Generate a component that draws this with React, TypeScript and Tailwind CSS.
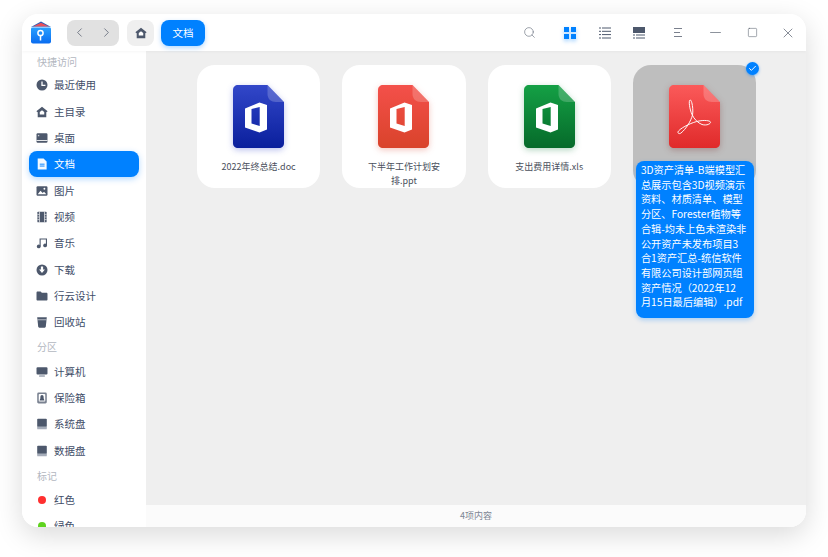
import { ChevronLeft, ChevronRight, Search, Minus, Square, X, Check } from "lucide-react";
import type { ReactNode } from "react";

const ink = "#4d586c";

/* Small filled glyphs for the sidebar, all on a 14px box */
const glyphs: Record<string, ReactNode> = {
  recent: (
    <>
      <circle cx="7" cy="7" r="6.4" fill={ink} />
      <path d="M7 3V7.4H11" stroke="#fff" strokeWidth="1.5" fill="none" />
    </>
  ),
  home: (
    <>
      <path d="M7 .8 13.6 6.2 12 7.2V13H2V7.2L.4 6.2Z" fill={ink} />
      <path d="M4.4 7 7 5l2.6 2V9.8H4.4Z" fill="#fff" />
    </>
  ),
  desktop: (
    <>
      <rect x=".6" y="1.6" width="12.8" height="10.8" rx="1.4" fill={ink} />
      <rect x=".6" y="9.4" width="12.8" height="1" fill="#fff" />
      <rect x="2.2" y="3.4" width="1.6" height="1.6" fill="#fff" opacity=".7" />
    </>
  ),
  doc: (
    <>
      <path d="M2 .6H8.8L12.4 4.2V13.4H2Z" fill="#fff" opacity=".95" />
      <path d="M4.4 7.2H10M4.4 9.4H10" stroke="#0081ff" strokeWidth="1.1" />
    </>
  ),
  image: (
    <>
      <rect x=".6" y="1.6" width="12.8" height="10.8" rx="1.4" fill={ink} />
      <path d="M2 10.8 5.2 6.6 7.8 9.4 9.4 7.8 12 10.8Z" fill="#fff" />
      <circle cx="9.8" cy="4.4" r="1.1" fill="#fff" />
    </>
  ),
  video: (
    <>
      <rect x="1.6" y=".8" width="10.8" height="12.4" rx="1" fill={ink} />
      <path d="M4 .8V13.2M10 .8V13.2" stroke="#fff" strokeWidth=".8" />
      <path d="M1.6 4H4M1.6 7H4M1.6 10H4M10 4H12.4M10 7H12.4M10 10H12.4" stroke="#fff" strokeWidth=".7" />
    </>
  ),
  music: (
    <>
      <path d="M4.8 11V2.4H12.2V9.8" stroke={ink} strokeWidth="1.3" fill="none" />
      <circle cx="3.2" cy="11" r="2.2" fill={ink} />
      <circle cx="10.6" cy="9.8" r="2.2" fill={ink} />
    </>
  ),
  download: (
    <>
      <circle cx="7" cy="7" r="6.4" fill={ink} />
      <path d="M5.7 3H8.3V6.4H10.4L7 10.4 3.6 6.4H5.7Z" fill="#fff" />
    </>
  ),
  folder: <path d="M.6 3.2C.6 2.4 1.1 1.8 1.9 1.8H5.4L6.8 3.2H12.1C12.9 3.2 13.4 3.8 13.4 4.5V11C13.4 11.8 12.9 12.3 12.1 12.3H1.9C1.1 12.3 .6 11.8 .6 11Z" fill={ink} />,
  trash: (
    <>
      <path d="M1.4 1.6H12.6L11.4 12.6C11.3 13.2 10.9 13.6 10.2 13.6H3.8C3.1 13.6 2.7 13.2 2.6 12.6Z" fill={ink} />
      <path d="M1.8 4.4H12.2" stroke="#fff" strokeWidth=".7" />
    </>
  ),
  computer: (
    <>
      <rect x=".6" y="1.6" width="12.8" height="8.4" rx="1.2" fill={ink} />
      <rect x="3.6" y="10.8" width="6.8" height="1.8" rx=".6" fill="#9aa2b0" />
    </>
  ),
  vault: (
    <>
      <rect x="1.4" y=".6" width="11.2" height="12.8" rx="1.6" fill={ink} opacity=".75" />
      <rect x="3.2" y="2.2" width="7.6" height="8.8" rx="1" fill="#fff" />
      <path d="M7 3.6a1.9 1.9 0 0 1 1.9 1.9V7.4L9.9 9.8H4.1L5.1 7.4V5.5A1.9 1.9 0 0 1 7 3.6Z" fill={ink} />
    </>
  ),
  disk: (
    <>
      <rect x="1.4" y=".8" width="11.2" height="9.6" rx="1" fill={ink} />
      <rect x="1.4" y="10" width="11.2" height="3.2" rx=".8" fill="#a6adba" />
    </>
  ),
};

function Glyph({ name }: { name: string }) {
  return (
    <svg width="12" height="12" viewBox="0 0 14 14" className="shrink-0">
      {glyphs[name]}
    </svg>
  );
}

function SideItem({ icon, label, active }: { icon: string; label: string; active?: boolean }) {
  return (
    <div
      className={
        "mx-[7px] flex h-[26.35px] shrink-0 items-center gap-[6px] rounded-lg pl-[7px] text-[10.5px] " +
        (active ? "bg-[#0081ff] text-white shadow-[0_2px_6px_rgba(0,129,255,0.3)]" : "text-[#414d68]")
      }
    >
      <Glyph name={icon} />
      <span>{label}</span>
    </div>
  );
}

function SideHead({ label }: { label: string }) {
  return <div className="flex h-[23px] shrink-0 items-center pl-[15px] text-[10px] text-[#b3b7bf] first:h-[21px]">{label}</div>;
}

function TagItem({ color, label }: { color: string; label: string }) {
  return (
    <div className="mx-[7px] flex h-[26.35px] shrink-0 items-center gap-[6px] pl-[7px] text-[10.5px] text-[#414d68]">
      <span className="flex w-[12px] shrink-0 justify-center">
        <span className={"h-[8px] w-[8px] rounded-full " + color} />
      </span>
      <span>{label}</span>
    </div>
  );
}

/* Document icon: page with folded corner, glyph drawn on top */
function FileIcon({ id, from, to, glow, kind }: { id: string; from: string; to: string; glow: string; kind: "office" | "pdf" }) {
  return (
    <svg width="51" height="64" viewBox="0 0 51 64" className={"block " + glow}>
      <defs>
        <linearGradient id={id} x1="0" y1="0" x2="0" y2="1">
          <stop offset="0" stopColor={from} />
          <stop offset="1" stopColor={to} />
        </linearGradient>
      </defs>
      <path d="M5 0H34.5L51 17V58C51 61.3 48.8 63 46 63H5C2.2 63 0 61.3 0 58V5C0 2 2.2 0 5 0Z" fill={"url(#" + id + ")"} />
      <path d="M34.5 0L51 17H43C38 17 34.5 14 34.5 9Z" fill="#fff" opacity=".2" />
      {kind === "office" ? (
        <path
          fillRule="evenodd"
          d="M12 23.5 26.5 17.5 34 20V44.5L26.5 47.5 12 42.5ZM26.7 22 18.5 24V38.5L26.7 41Z"
          fill="#fff"
        />
      ) : (
        <path
          d="M21 15C19.5 15.5 20.5 24 23 29.5C25 34 29 38 33 39.5C38 41 42 38.5 41.5 37C41 35.5 35 35 30 36C24 37 13 42 9.5 46C8 48 10 49.5 12 48C17 44 22 36 23.5 30C24.5 25 23 14.5 21 15Z"
          fill="none"
          stroke="#fff"
          strokeWidth="1"
          opacity=".95"
        />
      )}
    </svg>
  );
}

function FileCard({ name, icon }: { name: string; icon: ReactNode }) {
  return (
    <div className="flex h-[123px] w-[123.3px] flex-col items-center rounded-[18px] bg-white pt-[20px]">
      {icon}
      <div className="mt-[11px] w-[78px] text-center text-[9px] leading-[14px] text-[#4a4f5c]">{name}</div>
    </div>
  );
}

export default function App() {
  return (
    <div className="h-[557px] w-[828px] overflow-hidden bg-white pl-[22px] pt-[14px] font-['Noto_Sans_CJK_SC',sans-serif]">
      <div className="flex h-[513px] w-[784px] flex-col overflow-hidden rounded-[16px] bg-white shadow-[0_8px_28px_rgba(0,0,0,0.15)]">
        {/* title bar */}
        <header className="z-10 flex h-[37px] shrink-0 items-center bg-white pl-[8px] pr-[10px] shadow-[0_1px_3px_rgba(0,0,0,0.04)]">
          <svg width="22" height="23" viewBox="0 0 22 23" className="mr-[15px] shrink-0">
            <defs>
              <linearGradient id="logo" x1="0" y1="0" x2="0" y2="1">
                <stop offset="0" stopColor="#2aa2ff" />
                <stop offset="1" stopColor="#0a6cf0" />
              </linearGradient>
            </defs>
            <path d="M1 6 11 .6 21 6Z" fill="#2a5fb8" />
            <path d="M3 5.4 11 1.8 19 5.4Z" fill="#e8505b" />
            <rect x="1" y="6" width="20" height="16.4" rx="2" fill="url(#logo)" />
            <path d="M1 6.2H21" stroke="#cfe8ff" strokeWidth=".9" />
            <circle cx="10.5" cy="12" r="2.6" fill="none" stroke="#fff" strokeWidth="1.5" />
            <path d="M10.5 14.6V19.4" stroke="#fff" strokeWidth="1.5" />
          </svg>
          <div className="flex h-[26px] w-[52px] items-center justify-between rounded-lg bg-[#e1e1e1] px-[5px] text-[#555e6e]">
            <ChevronLeft size={15} strokeWidth={1.2} />
            <ChevronRight size={15} strokeWidth={1.2} />
          </div>
          <div className="ml-[8px] flex h-[26px] w-[27px] items-center justify-center rounded-lg bg-[#efefef]">
            <Glyph name="home" />
          </div>
          <div className="ml-[7px] flex h-[26px] w-[44px] items-center justify-center rounded-lg bg-[#0081ff] text-[10.5px] text-white shadow-[0_2px_5px_rgba(0,129,255,0.3)]">
            文档
          </div>
          <div className="flex-1" />
          <Search size={13} strokeWidth={1.2} className="mr-[28px] text-[#6b7280]" />
          <svg width="12" height="12" viewBox="0 0 12 12" className="mr-[23px] drop-shadow-[0_2px_2px_rgba(0,129,255,0.4)]">
            <path d="M0 0H5V5H0ZM7 0H12V5H7ZM0 7H5V12H0ZM7 7H12V12H7Z" fill="#0081ff" />
          </svg>
          <svg width="12" height="12" viewBox="0 0 12 12" className="mr-[22px]">
            <path d="M0 1H2M3 1H12M0 4.3H2M3 4.3H12M0 7.6H2M3 7.6H12M0 11H2M3 11H12" stroke={ink} strokeWidth="1" />
          </svg>
          <svg width="12" height="12" viewBox="0 0 12 12" className="mr-[28.5px]">
            <path d="M0 0H12V6H0Z" fill={ink} />
            <path d="M0 8H2M3 8H12M0 11H2M3 11H12" stroke={ink} strokeWidth="1" />
          </svg>
          <svg width="9" height="9" viewBox="0 0 9 9" className="mr-[24px]">
            <path d="M0 .5H8M0 4.5H6M0 8.5H8" stroke="#6b7280" strokeWidth=".9" />
          </svg>
          <Minus size={17} strokeWidth={0.9} className="mr-[23px] text-[#4b5563]" />
          <Square size={11} strokeWidth={1.1} className="mr-[22.5px] text-[#4b5563]" />
          <X size={16} strokeWidth={1} className="text-[#4b5563]" />
        </header>

        <div className="flex min-h-0 flex-1">
          {/* sidebar */}
          <aside className="flex w-[124px] shrink-0 flex-col overflow-hidden bg-white">
            <SideHead label="快捷访问" />
            <SideItem icon="recent" label="最近使用" />
            <SideItem icon="home" label="主目录" />
            <SideItem icon="desktop" label="桌面" />
            <SideItem icon="doc" label="文档" active />
            <SideItem icon="image" label="图片" />
            <SideItem icon="video" label="视频" />
            <SideItem icon="music" label="音乐" />
            <SideItem icon="download" label="下载" />
            <SideItem icon="folder" label="行云设计" />
            <SideItem icon="trash" label="回收站" />
            <SideHead label="分区" />
            <SideItem icon="computer" label="计算机" />
            <SideItem icon="vault" label="保险箱" />
            <SideItem icon="disk" label="系统盘" />
            <SideItem icon="disk" label="数据盘" />
            <SideHead label="标记" />
            <TagItem color="bg-[#ff3030]" label="红色" />
            <TagItem color="bg-[#5fd31f]" label="绿色" />
          </aside>

          {/* file area */}
          <main className="flex min-w-0 flex-1 flex-col">
            <div className="flex flex-1 items-start gap-[22px] bg-[#efefef] pl-[51px] pt-[14px]">
              <FileCard name="2022年终总结.doc" icon={<FileIcon id="word" from="#3247c9" to="#0a1f9c" glow="drop-shadow-[0_2px_3px_rgba(30,50,200,0.3)]" kind="office" />} />
              <FileCard name="下半年工作计划安排.ppt" icon={<FileIcon id="ppt" from="#f4504a" to="#d9432b" glow="drop-shadow-[0_2px_3px_rgba(220,70,50,0.3)]" kind="office" />} />
              <FileCard name="支出费用详情.xls" icon={<FileIcon id="xls" from="#14a045" to="#066a2a" glow="drop-shadow-[0_2px_3px_rgba(10,120,50,0.3)]" kind="office" />} />

              {/* selected file: the long name spills out of the tile */}
              <div className="relative h-[123px] w-[123.3px] rounded-[18px] bg-[#bebebe]">
                <div className="flex justify-center pt-[20px]">
                  <FileIcon id="pdf" from="#fb5a5a" to="#e02a2a" glow="drop-shadow-[0_2px_3px_rgba(120,30,30,0.3)]" kind="pdf" />
                </div>
                <span className="absolute -right-[3px] -top-[3px] flex h-[13px] w-[13px] items-center justify-center rounded-full bg-[#0081ff] text-white shadow-[0_1px_3px_rgba(0,129,255,0.5)]">
                  <Check size={9} strokeWidth={2.5} />
                </span>
                <div className="absolute left-[3px] top-[96px] w-[118px] rounded-lg bg-[#0081ff] pb-[8px] pl-[5px] pr-[6px] pt-[2px] text-[10.2px] leading-[14.7px] text-white shadow-[0_2px_5px_rgba(0,129,255,0.3)]">
                  3D资产清单-B端模型汇总展示包含3D视频演示资料、材质清单、模型分区、Forester植物等合辑-均未上色未渲染非公开资产未发布项目3合1资产汇总-统信软件有限公司设计部网页组资产情况（2022年12
                  <br />
                  月15日最后编辑）.pdf
                </div>
              </div>
            </div>
            <footer className="flex h-[22px] shrink-0 items-center justify-center bg-[#fbfbfb] text-[9px] text-[#7d8694]">4项内容</footer>
          </main>
        </div>
      </div>
    </div>
  );
}
